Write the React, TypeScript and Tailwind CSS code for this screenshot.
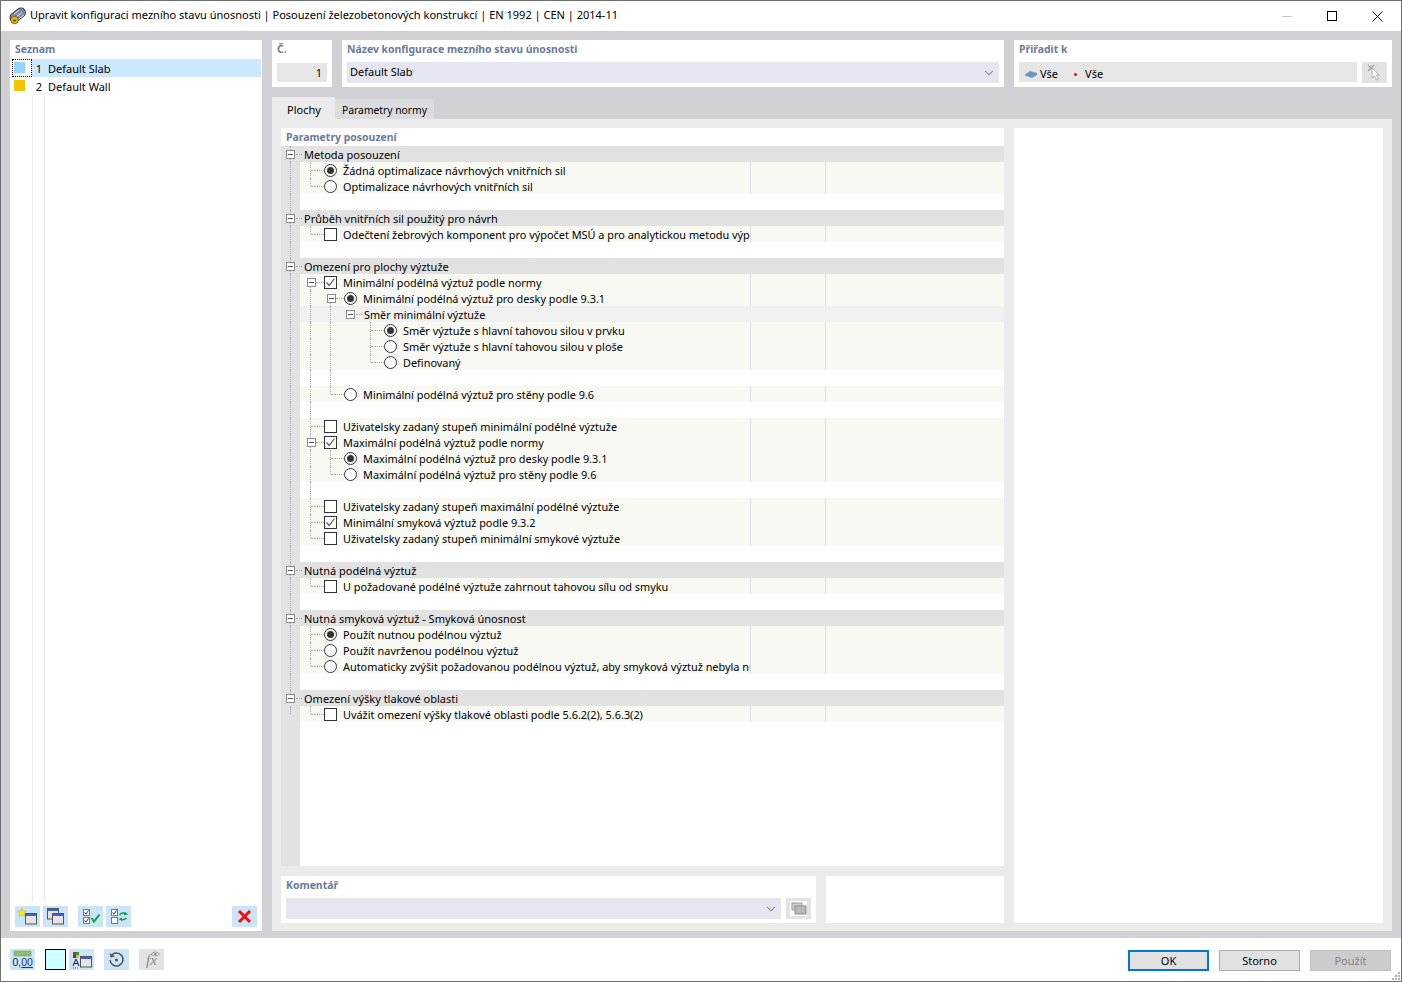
import { ChevronDown } from "lucide-react";
import type { ReactNode } from "react";

// guide values: 1 = full height, 2 = upper half (last child), 3 = lower half (first child)
type TreeRow = {
  kind: "header" | "item" | "sub" | "blank";
  text?: string;
  ctrl?: "radio" | "check";
  on?: boolean;
  depth?: 0 | 1 | 2;
  expander?: boolean;
  a?: 1 | 2 | 3;
  b?: 1 | 2 | 3;
  c?: 1 | 2 | 3;
};

const rows: TreeRow[] = [
  { kind: "header", text: "Metoda posouzení" },
  { kind: "item", a: 1, ctrl: "radio", on: true, text: "Žádná optimalizace návrhových vnitřních sil" },
  { kind: "item", a: 2, ctrl: "radio", text: "Optimalizace návrhových vnitřních sil" },
  { kind: "blank" },
  { kind: "header", text: "Průběh vnitřních sil použitý pro návrh" },
  { kind: "item", a: 2, ctrl: "check", text: "Odečtení žebrových komponent pro výpočet MSÚ a pro analytickou metodu výpočtu" },
  { kind: "blank" },
  { kind: "header", text: "Omezení pro plochy výztuže" },
  { kind: "item", a: 3, ctrl: "check", on: true, expander: true, text: "Minimální podélná výztuž podle normy" },
  { kind: "item", a: 1, b: 3, depth: 1, ctrl: "radio", on: true, expander: true, text: "Minimální podélná výztuž pro desky podle 9.3.1" },
  { kind: "sub", a: 1, b: 1, text: "Směr minimální výztuže" },
  { kind: "item", a: 1, b: 1, c: 1, depth: 2, ctrl: "radio", on: true, text: "Směr výztuže s hlavní tahovou silou v prvku" },
  { kind: "item", a: 1, b: 1, c: 1, depth: 2, ctrl: "radio", text: "Směr výztuže s hlavní tahovou silou v ploše" },
  { kind: "item", a: 1, b: 1, c: 2, depth: 2, ctrl: "radio", text: "Definovaný" },
  { kind: "blank", a: 1, b: 1 },
  { kind: "item", a: 1, b: 2, depth: 1, ctrl: "radio", text: "Minimální podélná výztuž pro stěny podle 9.6" },
  { kind: "blank", a: 1 },
  { kind: "item", a: 1, ctrl: "check", text: "Uživatelsky zadaný stupeň minimální podélné výztuže" },
  { kind: "item", a: 1, ctrl: "check", on: true, expander: true, text: "Maximální podélná výztuž podle normy" },
  { kind: "item", a: 1, b: 1, depth: 1, ctrl: "radio", on: true, text: "Maximální podélná výztuž pro desky podle 9.3.1" },
  { kind: "item", a: 1, b: 2, depth: 1, ctrl: "radio", text: "Maximální podélná výztuž pro stěny podle 9.6" },
  { kind: "blank", a: 1 },
  { kind: "item", a: 1, ctrl: "check", text: "Uživatelsky zadaný stupeň maximální podélné výztuže" },
  { kind: "item", a: 1, ctrl: "check", on: true, text: "Minimální smyková výztuž podle 9.3.2" },
  { kind: "item", a: 2, ctrl: "check", text: "Uživatelsky zadaný stupeň minimální smykové výztuže" },
  { kind: "blank" },
  { kind: "header", text: "Nutná podélná výztuž" },
  { kind: "item", a: 2, ctrl: "check", text: "U požadované podélné výztuže zahrnout tahovou sílu od smyku" },
  { kind: "blank" },
  { kind: "header", text: "Nutná smyková výztuž - Smyková únosnost" },
  { kind: "item", a: 1, ctrl: "radio", on: true, text: "Použít nutnou podélnou výztuž" },
  { kind: "item", a: 1, ctrl: "radio", text: "Použít navrženou podélnou výztuž" },
  { kind: "item", a: 2, ctrl: "radio", text: "Automaticky zvýšit požadovanou podélnou výztuž, aby smyková výztuž nebyla nutná" },
  { kind: "blank" },
  { kind: "header", text: "Omezení výšky tlakové oblasti" },
  { kind: "item", a: 2, ctrl: "check", text: "Uvážit omezení výšky tlakové oblasti podle 5.6.2(2), 5.6.3(2)" },
];

function Expander() {
  return (
    <span className="relative z-10 flex h-[9px] w-[9px] shrink-0 items-center justify-center border border-[#8c8c8c] bg-white">
      <span className="h-px w-[5px] bg-[#555555]" />
    </span>
  );
}

function Radio({ on }: { on?: boolean }) {
  return (
    <span className="flex h-[13px] w-[13px] shrink-0 items-center justify-center rounded-full border border-[#333333] bg-white">
      {on ? <span className="h-[7px] w-[7px] rounded-full bg-[#333333]" /> : null}
    </span>
  );
}

function Check({ on }: { on?: boolean }) {
  return (
    <span className="flex h-[13px] w-[13px] shrink-0 items-center justify-center border border-[#333333] bg-white">
      {on ? (
        <svg width="11" height="11" viewBox="0 0 11 11" fill="none">
          <path d="M1.5 5.5 L4.2 8.5 L9.5 1.5" stroke="#555555" strokeWidth="1.2" />
        </svg>
      ) : null}
    </span>
  );
}

function HDots({ className }: { className: string }) {
  return <span className={`shrink-0 border-t border-dotted border-[#a8a8a8] ${className}`} />;
}

function Guide({ pos, mode }: { pos: string; mode?: 1 | 2 | 3 }) {
  if (!mode) return null;
  const span = mode === 1 ? "top-0 h-4" : mode === 2 ? "top-0 h-2" : "top-2 h-2";
  return <span className={`absolute border-l border-dotted border-[#a8a8a8] ${pos} ${span}`} />;
}

function Row({ row, index }: { row: TreeRow; index: number }) {
  const depth = row.depth ?? 0;
  const rowBg =
    row.kind === "header"
      ? "bg-[#e2e2e2]"
      : row.kind === "sub"
        ? "bg-[#f0f0f0]"
        : row.kind === "item"
          ? "bg-[#f8f9f3]"
          : "bg-white";

  return (
    <div className="flex h-4">
      <div className="relative w-[19px] shrink-0 bg-[#e2e2e2]">
        {index < 34 ? <Guide pos="left-[9px]" mode={1} /> : <Guide pos="left-[9px]" mode={2} />}
        {row.kind === "header" ? (
          <span className="absolute left-[5px] top-1">
            <Expander />
          </span>
        ) : null}
      </div>
      <div className={`relative flex min-w-0 flex-1 ${rowBg}`}>
        <Guide pos="left-[10px]" mode={row.a} />
        <Guide pos="left-[30px]" mode={row.b} />
        <Guide pos="left-[70px]" mode={row.c} />
        {row.kind === "header" ? (
          <>
            <HDots className="absolute -left-1 top-[8px] z-10 w-[6px]" />
            <span className="relative top-px pl-1 leading-4 text-black">{row.text}</span>
          </>
        ) : null}
        {row.kind === "sub" ? (
          <div className="relative flex h-4 items-center pl-[46px]">
            <Expander />
            <HDots className="ml-px w-[6px]" />
            <span className="relative top-px pl-[2px] text-[10.85px] leading-4 text-black">{row.text}</span>
          </div>
        ) : null}
        {row.kind === "item" ? (
          <>
            <div className="h-4 w-[451px] shrink-0 overflow-hidden border-r border-[#e2e2e2]">
              <div
                className={`flex h-4 w-[700px] items-center ${depth === 0 ? "pl-[6px]" : depth === 1 ? "pl-[26px]" : "pl-[66px]"}`}
              >
                {row.expander ? (
                  <>
                    <span className="ml-px">
                      <Expander />
                    </span>
                    <HDots className="w-[8px]" />
                  </>
                ) : (
                  <>
                    <HDots className="ml-[5px] w-[4px]" />
                    <HDots className="w-[9px]" />
                  </>
                )}
                {row.ctrl === "radio" ? <Radio on={row.on} /> : <Check on={row.on} />}
                <span className="relative top-px whitespace-nowrap pl-[6px] text-[10.9px] leading-4 text-black">{row.text}</span>
              </div>
            </div>
            <div className="h-4 w-[75px] shrink-0 border-r border-[#e2e2e2]" />
          </>
        ) : null}
      </div>
    </div>
  );
}

function GroupBox({ label, className, children }: { label: string; className: string; children: ReactNode }) {
  return (
    <div className={`flex flex-col bg-white px-[5px] ${className}`}>
      <div className="h-[22px] pt-[2px] text-[10.45px] font-bold leading-[14px] text-[#6b7a99]">{label}</div>
      {children}
    </div>
  );
}

function ToolButton({ children, gray }: { children: ReactNode; gray?: boolean }) {
  return (
    <span className={`flex h-[21px] w-[25px] shrink-0 items-center justify-center ${gray ? "bg-[#e3e3e3]" : "bg-[#cce4f7]"}`}>
      {children}
    </span>
  );
}

function WindowIcon({ x = 0, y = 0 }: { x?: number; y?: number }) {
  return (
    <g transform={`translate(${x} ${y})`}>
      <rect x="0.5" y="0.5" width="11" height="10.5" fill="#e4e4e4" stroke="#555555" />
      <rect x="1" y="1" width="10" height="2" fill="#3b5fd8" />
    </g>
  );
}

function CheckRow({ y, on }: { y: number; on: boolean }) {
  return (
    <g transform={`translate(2 ${y})`}>
      <rect x="0.5" y="0.5" width="6" height="6" fill="#ffffff" stroke="#777777" />
      {on ? <path d="M1.5 3.5 L3 5 L5.5 1.5" stroke="#333333" fill="none" /> : null}
    </g>
  );
}

function ListRow({ no, name, color, selected }: { no: string; name: string; color: string; selected?: boolean }) {
  return (
    <div className="flex h-[18px] items-center pl-[2px] pr-px">
      <span className={`flex h-[18px] w-5 shrink-0 items-center pl-[2px] ${selected ? "outline-1 -outline-offset-1 outline-dotted outline-black" : ""}`}>
        <span className={`relative -top-px h-[11px] w-[11px] ${color}`} />
      </span>
      <span className={`flex h-[18px] flex-1 items-center ${selected ? "bg-[#cce8ff]" : ""}`}>
        <span className="relative top-px w-[10px] text-right">{no}</span>
        <span className="relative top-px pl-[6px]">{name}</span>
      </span>
    </div>
  );
}

export default function App() {
  return (
    <div className="flex h-[982px] w-[1402px] flex-col overflow-hidden border border-[#707070] bg-white font-['Noto_Sans',sans-serif] text-[11px] text-black">
      <div className="flex h-[30px] shrink-0 items-center bg-white pl-2">
        <svg width="18" height="18" viewBox="0 0 18 18" className="shrink-0">
          <path d="M5.5 10.5 L12 5.5" stroke="#2f3a4c" strokeWidth="10" strokeLinecap="round" />
          <path d="M5.5 10.5 L12 5.5" stroke="#7d8ba3" strokeWidth="8" strokeLinecap="round" />
          <path d="M5 7 L10 3 M7 10 L13 5.5 M9 12.5 L15 8" stroke="#dfe5ee" strokeWidth="1" />
          <circle cx="5.5" cy="13" r="3.8" fill="#e6b422" stroke="#5f4a10" strokeWidth="0.8" />
          <circle cx="5.5" cy="13.5" r="1.2" fill="#5f4a10" />
        </svg>
        <span className="relative -top-px pl-[3px] leading-4">
          Upravit konfiguraci mezního stavu únosnosti | Posouzení železobetonových konstrukcí | EN 1992 | CEN | 2014-11
        </span>
        <div className="ml-auto flex items-center">
          <span className="mr-[35px] h-px w-[10px] bg-[#c4c4c4]" />
          <span className="mr-[35px] h-[10px] w-[10px] border border-black" />
          <svg width="11" height="11" viewBox="0 0 11 11" className="mr-[18px]">
            <path d="M0.5 0.5 L10.5 10.5 M10.5 0.5 L0.5 10.5" stroke="#000000" strokeWidth="1" />
          </svg>
        </div>
      </div>

      <div className="flex min-h-0 flex-1 gap-[10px] bg-[#d0d0d5] pb-[7px] pl-[9px] pr-[9px] pt-[9px]">
        <div className="flex w-[252px] shrink-0 flex-col bg-white">
          <div className="h-[19px] pl-[5px] pt-[2px] text-[10.45px] font-bold leading-[14px] text-[#6b7a99]">Seznam</div>
          <div className="relative flex-1">
            <ListRow no="1" name="Default Slab" color="bg-[#92d5f8]" selected />
            <ListRow no="2" name="Default Wall" color="bg-[#f5c400]" />
            <span className="absolute bottom-1 left-[22px] top-9 border-l border-[#ececec]" />
            <span className="absolute bottom-1 left-[34px] top-9 border-l border-[#ececec]" />
          </div>
          <div className="flex h-[25px] shrink-0 items-start pl-[5px]">
            <ToolButton>
              <svg width="21" height="17" viewBox="0 0 21 17">
                <WindowIcon x={8} y={5} />
                <path d="M5 0 L6.2 3 L9.5 3.2 L7 5.3 L8 8.5 L5 6.8 L2 8.5 L3 5.3 L0.5 3.2 L3.8 3 Z" fill="#ffee10" stroke="#c0a818" strokeWidth="0.5" />
              </svg>
            </ToolButton>
            <span className="w-[3px]" />
            <ToolButton>
              <svg width="19" height="17" viewBox="0 0 19 17">
                <WindowIcon x={1} y={0} />
                <WindowIcon x={6} y={5} />
              </svg>
            </ToolButton>
            <span className="w-[10px]" />
            <ToolButton>
              <svg width="20" height="17" viewBox="0 0 20 17">
                <CheckRow y={1} on />
                <CheckRow y={9} on />
                <path d="M10.5 10 L13 13.5 L18.5 6.5" stroke="#12a150" strokeWidth="2" fill="none" />
              </svg>
            </ToolButton>
            <span className="w-[3px]" />
            <ToolButton>
              <svg width="20" height="17" viewBox="0 0 20 17">
                <CheckRow y={1} on />
                <CheckRow y={9} on={false} />
                <path d="M10.5 7 C12 4.5 15 4.5 17 6 M17.5 10 C15.5 12 13 12 11 11" stroke="#12a150" strokeWidth="1.5" fill="none" />
                <path d="M15.5 3.5 L19 6.5 L15 7.5 Z M13 9.5 L9.5 11 L13 13 Z" fill="#12a150" />
              </svg>
            </ToolButton>
            <span className="w-[101px]" />
            <ToolButton>
              <svg width="15" height="15" viewBox="0 0 15 15">
                <path d="M2 2 L13 13 M13 2 L2 13" stroke="#f01010" strokeWidth="3" />
              </svg>
            </ToolButton>
          </div>
        </div>

        <div className="flex min-w-0 flex-1 flex-col">
          <div className="flex h-[47px] shrink-0 gap-[10px]">
            <GroupBox label="Č." className="w-[60px]">
              <div className="mt-px h-[19px] w-[50px] bg-[#e6e6e6] pr-[5px] text-right leading-[19px]">1</div>
            </GroupBox>
            <GroupBox label="Název konfigurace mezního stavu únosnosti" className="w-[662px]">
              <div className="flex h-[21px] items-center justify-between bg-[#e6e6f0] pl-[3px] pr-[3px]">
                <span>Default Slab</span>
                <ChevronDown size={14} strokeWidth={1} />
              </div>
            </GroupBox>
            <GroupBox label="Přiřadit k" className="w-[378px]">
              <div className="flex gap-[5px]">
                <div className="flex h-5 w-[338px] items-center bg-[#e6e6e6] pl-[6px] pt-[5px]">
                  <svg width="13" height="9" viewBox="0 0 13 9" className="shrink-0">
                    <path d="M0 4.5 L5 1 L12 3 L12 5 L7 8 L0 5.5 Z" fill="#6d97c0" />
                  </svg>
                  <span className="pl-[2px]">Vše</span>
                  <span className="ml-4 h-[3px] w-[3px] shrink-0 rounded-full bg-[#d01020]" />
                  <span className="pl-[8px]">Vše</span>
                </div>
                <div className="flex h-[21px] w-[25px] items-center justify-center bg-[#e3e3e3]">
                  <svg width="17" height="18" viewBox="0 0 17 18">
                    <path d="M2 1 L8 7 M8 1 L2 7" stroke="#a0a0a0" strokeWidth="1.2" />
                    <path d="M6 4 L6 14 L8.5 12 L10.5 16 L12.5 15 L10.5 11 L13.5 11 Z" fill="#f4f4f4" stroke="#a8a8a8" strokeWidth="0.8" />
                  </svg>
                </div>
              </div>
            </GroupBox>
          </div>

          <div className="flex h-[32px] shrink-0 items-end">
            <div className="flex h-[22px] w-[63px] items-center justify-center bg-[#ebebeb] pl-px pt-[4px]">Plochy</div>
            <div className="flex h-[20px] w-[99px] items-center justify-center bg-[#dcdcdf] pt-[3px] text-[10.3px]">Parametry normy</div>
          </div>

          <div className="flex min-h-0 flex-1 gap-[10px] bg-[#ebebeb] pb-2 pl-[9px] pr-[9px] pt-[9px]">
            <div className="flex w-[723px] shrink-0 flex-col gap-[10px]">
              <div className="flex min-h-0 flex-1 flex-col bg-white">
                <div className="h-[18px] shrink-0 pl-[5px] pt-[2px] text-[10.45px] font-bold leading-[14px] text-[#6b7a99]">
                  Parametry posouzení
                </div>
                {rows.map((row, i) => (
                  <Row key={i} row={row} index={i} />
                ))}
                <div className="flex min-h-0 flex-1">
                  <div className="w-[19px] bg-[#e2e2e2]" />
                </div>
              </div>
              <div className="flex h-[47px] shrink-0 gap-[10px]">
                <GroupBox label="Komentář" className="w-[535px]">
                  <div className="flex gap-[5px]">
                    <div className="flex h-[21px] w-[495px] items-center justify-end bg-[#e6e6f0] pr-[3px]">
                      <ChevronDown size={14} strokeWidth={1} />
                    </div>
                    <div className="flex h-[21px] w-[25px] items-center justify-center bg-[#e3e3e3]">
                      <svg width="17" height="15" viewBox="0 0 17 15">
                        <rect x="0" y="0" width="17" height="15" fill="#ffffff" />
                        <rect x="2" y="2" width="10" height="7" fill="#cfcfcf" stroke="#9a9a9a" />
                        <rect x="5" y="5" width="11" height="8" fill="#b8b8b8" stroke="#8a8a8a" />
                      </svg>
                    </div>
                  </div>
                </GroupBox>
                <div className="flex-1 bg-white" />
              </div>
            </div>
            <div className="flex-1 bg-white" />
          </div>
        </div>
      </div>

      <div className="relative flex h-[43px] shrink-0 items-center pl-[9px] pr-[10px]">
        <ToolButton>
          <svg width="21" height="19" viewBox="0 0 21 19">
            <rect x="2" y="1" width="17" height="5" fill="#8cc070" stroke="#6aa050" strokeWidth="0.5" />
            <text x="0.5" y="16" fontSize="10.5" fontFamily="Liberation Sans" fill="#222244">
              0,<tspan fill="#2a2a90" textDecoration="underline">00</tspan>
            </text>
          </svg>
        </ToolButton>
        <span className="ml-[10px] h-[21px] w-[21px] border border-black bg-[#ccffff]" />
        <span className="w-[3px]" />
        <ToolButton>
          <svg width="21" height="18" viewBox="0 0 21 18">
            <rect x="2" y="1" width="3" height="3" fill="#d02020" />
            <rect x="5" y="1" width="3" height="3" fill="#20a030" />
            <rect x="2" y="4" width="3" height="3" fill="#2040d0" />
            <rect x="5" y="4" width="3" height="3" fill="#e0c020" />
            <path d="M2 15 L5 8 L8 15 M3 12.5 H7" stroke="#222222" fill="none" />
            <path d="M2 17 H8" stroke="#777777" strokeDasharray="1 1" />
            <WindowIcon x={9} y={5} />
          </svg>
        </ToolButton>
        <span className="w-[10px]" />
        <ToolButton>
          <svg width="17" height="17" viewBox="0 0 17 17" fill="none">
            <path d="M3 5 A6.5 6.5 0 1 1 2 9" stroke="#555555" strokeWidth="1.6" />
            <path d="M1.5 2 L2.5 6.5 L7 5.5 Z" fill="#555555" />
            <circle cx="8.5" cy="9" r="1.5" fill="#555555" />
          </svg>
        </ToolButton>
        <span className="w-[10px]" />
        <ToolButton gray>
          <span className="relative flex h-[21px] w-[25px] items-center justify-center">
            <span className="relative top-px font-['Liberation_Serif',serif] text-[15px] italic leading-none text-[#8a8a8a]">fx</span>
            <svg width="9" height="6" viewBox="0 0 9 6" className="absolute right-[4px] top-[2px]" fill="none">
              <path d="M0.5 3 C2.5 0.5 6.5 0.5 8.5 3 C6.5 5.5 2.5 5.5 0.5 3 Z" stroke="#8a8a8a" strokeWidth="0.8" />
              <circle cx="4.5" cy="3" r="1.2" fill="#8a8a8a" />
            </svg>
          </span>
        </ToolButton>

        <div className="ml-auto mt-[2px] flex gap-[10px]">
          <button type="button" className="h-[21px] w-[81px] border-2 border-[#0078d7] bg-[#e1e1e1] leading-[17px]">
            OK
          </button>
          <button type="button" className="h-[21px] w-[81px] border border-[#adadad] bg-[#e1e1e1] leading-[19px]">
            Storno
          </button>
          <button type="button" className="h-[21px] w-[81px] border border-[#bfbfbf] bg-[#cccccc] leading-[19px] text-[#838383]">
            Použít
          </button>
        </div>
        <svg width="9" height="9" viewBox="0 0 9 9" className="absolute bottom-0 right-0" fill="#b0b0b0">
          <rect x="6" y="0" width="2" height="2" />
          <rect x="3" y="3" width="2" height="2" />
          <rect x="6" y="3" width="2" height="2" />
          <rect x="0" y="6" width="2" height="2" />
          <rect x="3" y="6" width="2" height="2" />
          <rect x="6" y="6" width="2" height="2" />
        </svg>
      </div>
    </div>
  );
}
